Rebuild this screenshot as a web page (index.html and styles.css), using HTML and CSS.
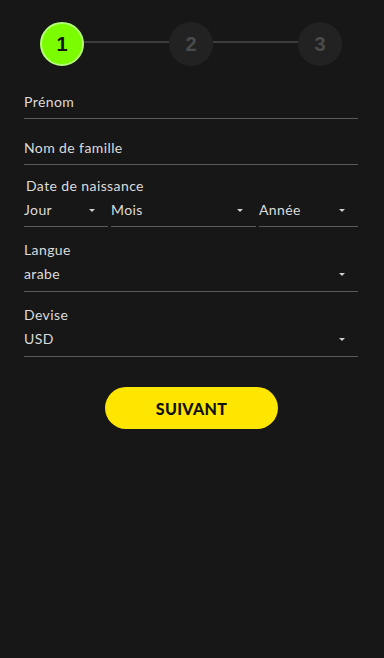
FILE: index.html
```html
<!DOCTYPE html>
<html lang="fr">
<head>
  <meta charset="UTF-8">
  <meta name="viewport" content="width=device-width, initial-scale=1.0">
  <title>Inscription</title>
  <link rel="stylesheet" href="styles.css">
</head>
<body>
  <div class="page">
    <!-- étapes -->
    <div class="stepper">
      <div class="step active">1</div>
      <div class="step-line"></div>
      <div class="step">2</div>
      <div class="step-line"></div>
      <div class="step">3</div>
    </div>

    <form class="form">
      <div class="field"><span class="placeholder">Prénom</span></div>
      <div class="field"><span class="placeholder">Nom de famille</span></div>

      <div class="group date-group">
        <div class="group-label">Date de naissance</div>
        <div class="date-row">
          <div class="select"><span>Jour</span><span class="arrow"></span></div>
          <div class="select"><span>Mois</span><span class="arrow"></span></div>
          <div class="select"><span>Année</span><span class="arrow"></span></div>
        </div>
      </div>

      <div class="group">
        <div class="label">Langue</div>
        <div class="select wide"><span>arabe</span><span class="arrow"></span></div>
      </div>

      <div class="group">
        <div class="label">Devise</div>
        <div class="select wide"><span>USD</span><span class="arrow"></span></div>
      </div>

      <div class="actions">
        <button type="button" class="btn-next">SUIVANT</button>
      </div>
    </form>
  </div>
</body>
</html>
```

FILE: styles.css
```css
html, body {
  margin: 0;
  background: #171717;
}
body {
  font-family: 'Lato', 'Noto Sans', sans-serif;
  color: #dcdcdc;
  font-size: 14px;
  letter-spacing: 0.4px;
}
.page {
  padding: 22px 26px 0 24px;
}
.stepper {
  display: flex;
  align-items: center;
  padding: 0 16px 0 16px;
}
.step {
  width: 44px;
  height: 44px;
  border-radius: 50%;
  background: #222;
  color: #4a4a4a;
  font-family: 'Liberation Sans', Arial, sans-serif;
  font-weight: bold;
  font-size: 20px;
  letter-spacing: 0;
  display: flex;
  align-items: center;
  justify-content: center;
  box-sizing: border-box;
  flex: none;
}
.step.active {
  background: #7cfc00;
  border: 2px solid #b4ff78;
  color: #151515;
}
.step-line {
  flex: 1;
  height: 2px;
  background: #3c3c3c;
  margin-top: -4px;
}
.form {
  margin-top: 7px;
}
.field {
  height: 37px;
  border-bottom: 1px solid #5a5a5a;
  display: flex;
  align-items: flex-end;
  padding-bottom: 8px;
  line-height: 16px;
}
.group {
  margin-top: 15px;
  line-height: 16px;
}
.date-group {
  margin-top: 13px;
}
.group-label {
  padding-left: 2px;
}
.label {
  margin-bottom: 8px;
}
.date-row {
  display: grid;
  grid-template-columns: 84px 145px 1fr;
  gap: 3px;
  margin-top: 8px;
}
.select {
  display: flex;
  align-items: center;
  padding-bottom: 8px;
  padding-right: 13px;
  border-bottom: 1px solid #5a5a5a;
}
.select.wide {
  padding-bottom: 9px;
}
.arrow {
  margin-left: auto;
  width: 0;
  height: 0;
  border-left: 3px solid transparent;
  border-right: 3px solid transparent;
  border-top: 3px solid #d0d0d0;
}
.group + .group {
  margin-top: 15px;
}
.actions {
  display: flex;
  justify-content: center;
  margin-top: 30px;
  padding-left: 1px;
}
.btn-next {
  width: 173px;
  height: 42px;
  border: none;
  border-radius: 21px;
  background: #ffe600;
  color: #111;
  font-family: 'Lato', sans-serif;
  font-weight: 900;
  font-size: 16px;
  letter-spacing: 0.3px;
  cursor: pointer;
}
```
